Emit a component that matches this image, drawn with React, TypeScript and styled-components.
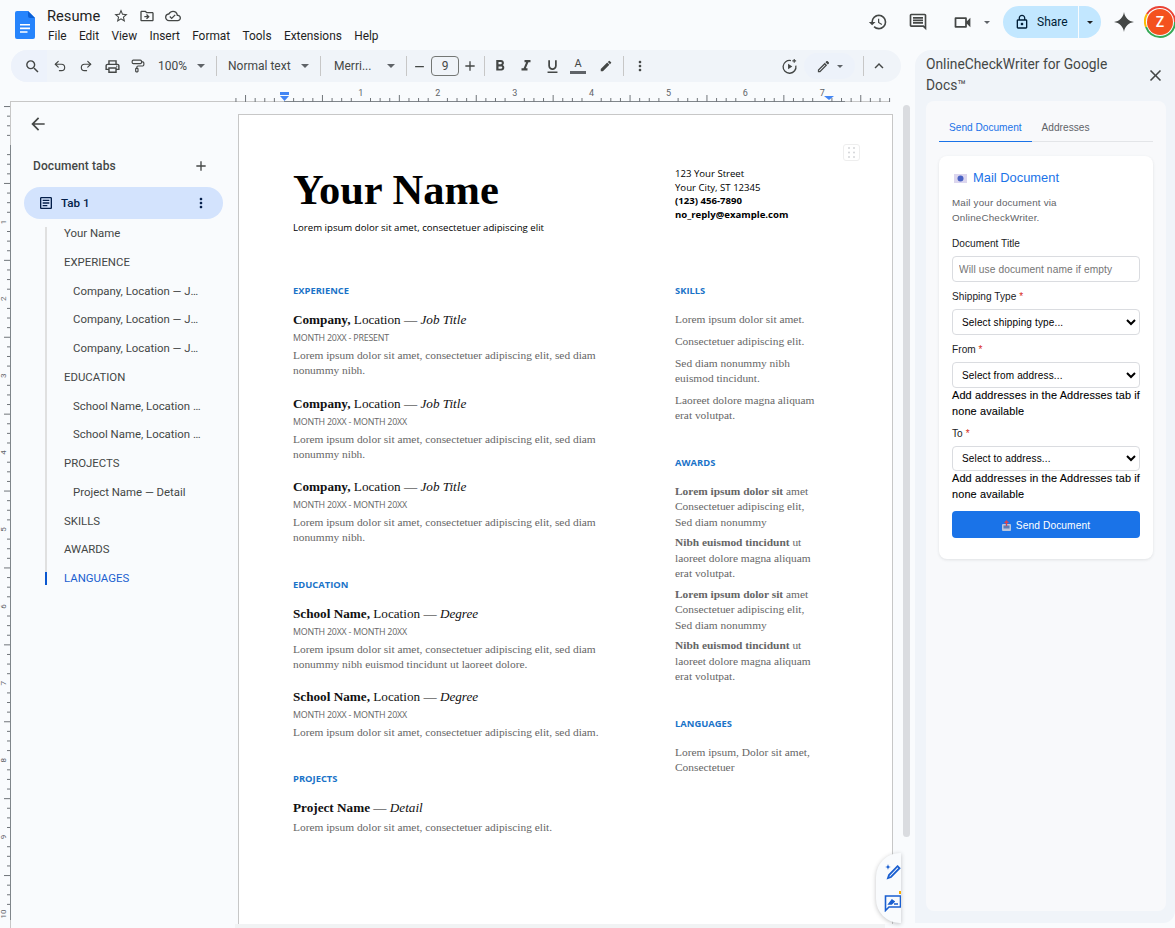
import React from "react";
import styled, { createGlobalStyle } from "styled-components";
import {
  MdSearch, MdOutlinePrint, MdFormatBold, MdFormatItalic,
  MdFormatUnderlined, MdStarBorder, MdOutlineDriveFileMove, MdOutlineCloudDone, MdHistory,
  MdOutlineComment, MdOutlineVideocam, MdLockOutline, MdMoreVert, MdExpandLess, MdArrowBack,
  MdAdd, MdRemove, MdClose, MdOutlineArticle, MdEdit, MdOutlineEdit,
} from "react-icons/md";
import { Undo2, Redo2, PaintRoller } from "lucide-react";

const Global = createGlobalStyle`
  html, body { margin: 0; padding: 0; background: #f9fbfd; }
  * { box-sizing: border-box; }
`;

const serif = `"Liberation Serif", serif`;
const open = `"Open Sans", sans-serif`;
const ui = `Roboto, sans-serif`;
const arial = `"Liberation Sans", Arial, sans-serif`;

const Root = styled.div`
  width: 1175px; height: 928px; overflow: hidden; background: #f9fbfd;
  display: flex; flex-direction: column; font-family: ${ui}; color: #1f1f1f;
`;
const Header = styled.header`
  height: 50px; flex: none; display: flex; align-items: center; justify-content: space-between; padding-left: 15px;
`;
const LeftHead = styled.div`display: flex; align-items: center;`;
const TitleBlock = styled.div`margin-left: 12px; display: flex; flex-direction: column;`;
const TitleRow = styled.div`display: flex; align-items: center; height: 20px; color: #444746; gap: 10px;`;
const DocTitle = styled.span`
  font-size: 14.7px; color: #1f1f1f; width: 52px; margin-right: 4px; line-height: 20px;
`;
const MenuBar = styled.nav`display: flex; gap: 12.3px; margin-top: 2px; padding-left: 1px;`;
const MenuItem = styled.span`font-size: 11.9px; line-height: 16px; color: #1f1f1f;`;

const RightHead = styled.div`
  display: flex; align-items: center; color: #444746; margin-right: -1px; align-self: flex-start; padding-top: 6px;
`;
const HeadIcon = styled.span<{ $ml: number }>`
  display: flex; margin-left: ${(p) => p.$ml}px; color: #444746;
`;
const Caret = styled.span<{ $ml?: number; $dark?: boolean }>`
  flex: none; width: 0; height: 0; margin-left: ${(p) => p.$ml ?? 0}px;
  border-left: 4px solid transparent; border-right: 4px solid transparent;
  border-top: 4px solid ${(p) => (p.$dark ? "#1f1f1f" : "#5f6368")};
`;
const SmallCaret = styled(Caret)`
  border-left-width: 3px; border-right-width: 3px; border-top-width: 3px;
`;
const SharePill = styled.div`
  margin-left: 13px; width: 98px; height: 32px; border-radius: 16px; background: #c2e7ff;
  display: flex; align-items: center; color: #001d35;
`;
const ShareMain = styled.div`
  width: 76px; height: 100%; padding-left: 11px; display: flex; align-items: center; gap: 7px;
  border-right: 1px solid #f9fbfd; font-size: 12px; font-weight: 400;
`;
const ShareCaret = styled.div`flex: 1; display: flex; justify-content: center;`;
const Avatar = styled.div`
  position: relative; flex: none; margin-left: 10px; width: 32px; height: 32px;
`;
const AvatarFace = styled.div`
  position: absolute; inset: 3px; border-radius: 50%; background: #f4511e; color: #fff;
  display: flex; align-items: center; justify-content: center; font-size: 14px; font-weight: 500;
`;

const Body = styled.div`flex: 1; display: flex; min-height: 0;`;
const LeftColumn = styled.div`
  position: relative; width: 915px; flex: none; display: flex; flex-direction: column; overflow: hidden;
`;
const Toolbar = styled.div`
  flex: none; height: 32px; margin-left: 11px; width: 890px; padding-right: 9px; border-radius: 16px;
  background: #f0f4f9; display: flex; align-items: center; color: #444746; overflow: hidden;
`;
const SearchSlot = styled.div`
  width: 36px; height: 100%; padding-left: 8px; display: flex; align-items: center; background: #edf2fb;
`;
const ToolBtn = styled.span<{ $ml?: number; $w?: number }>`
  flex: none; width: ${(p) => p.$w ?? 26}px; margin-left: ${(p) => p.$ml ?? 0}px;
  display: flex; align-items: center; justify-content: center; color: #444746;
`;
const Dropdown = styled.div<{ $ml: number; $w: number }>`
  flex: none; margin-left: ${(p) => p.$ml}px; width: ${(p) => p.$w}px;
  display: flex; align-items: center; justify-content: space-between; padding-right: 1px;
  font-size: 12px; color: #444746;
`;
const Sep = styled.span<{ $ml: number }>`
  flex: none; width: 1px; height: 20px; background: #c7c7c7; margin-left: ${(p) => p.$ml}px;
`;
const SizeBox = styled.span`
  flex: none; margin-left: 4px; width: 28px; height: 20px; border: 1px solid #747775; border-radius: 4px;
  display: flex; align-items: center; justify-content: center; font-size: 12px; color: #444746;
`;
const ColorA = styled.span`
  flex: none; width: 26px; display: flex; flex-direction: column; align-items: center;
  font-size: 11px; line-height: 12px; color: #444746;
`;
const ColorBar = styled.span`width: 16px; height: 3px; background: #5f6368; margin-top: 1px;`;
const Spacer = styled.span`flex: 1;`;
const ModePill = styled.div`
  flex: none; margin-left: 2px; width: 51px; height: 26px; border-radius: 13px; background: #edf2fa;
  display: flex; align-items: center; justify-content: center; gap: 6px; color: #444746;
`;

const RulerSvg = styled.svg`display: block; flex: none; font-family: ${ui};`;
const Editor = styled.div`flex: 1; display: flex; min-height: 0;`;
const Sidebar = styled.aside`
  width: 227px; flex: none; display: flex; flex-direction: column;
`;
const BackRow = styled.div`
  height: 44px; flex: none; padding-left: 17px; display: flex; align-items: center; color: #444746;
`;
const TabsHead = styled.div`
  height: 40px; flex: none; margin: 0 29px 0 22px; display: flex; align-items: center; justify-content: space-between;
  font-size: 12px; font-weight: 500; color: #444746; letter-spacing: 0.1px;
`;
const TabPill = styled.div`
  flex: none; margin: 1px 15px 0 13px; height: 32px; border-radius: 16px; background: #d3e3fd;
  display: flex; align-items: center; padding: 0 14px 0 14px; color: #041e49; font-size: 11.6px; font-weight: 500;
`;
const TabLabel = styled.span`flex: 1; margin-left: 7px;`;
const Outline = styled.ul`
  position: relative; list-style: none; margin: 0 0 0 34px; padding: 0; width: 170px;
  &::before { content: ""; position: absolute; left: 0; top: 8px; bottom: 8px; width: 2px; background: #e0e0e0; }
  &::after { content: ""; position: absolute; left: 0; bottom: 8px; height: 13px; width: 2px; background: #0b57d0; }
`;
const OutlineItem = styled.li<{ $nested?: boolean; $active?: boolean }>`
  height: 28.75px; line-height: 28.75px; padding-left: ${(p) => (p.$nested ? 28 : 19)}px; padding-right: 11px;
  font-size: 11.4px; color: ${(p) => (p.$active ? "#1a5fd0" : "#444746")};
  white-space: nowrap; overflow: hidden; text-overflow: ellipsis;
`;
const PageColumn = styled.div`
  width: 655px; flex: none; padding-top: 12px; display: flex; flex-direction: column;
`;
const Page = styled.main`
  position: relative; flex: none; height: 810px; background: #fff; border: 1px solid #c7c7c7; border-bottom: 0;
  padding: 50px 0 0 54px; overflow: hidden;
`;
const HScroll = styled.div`height: 4px; margin-left: -3px; width: 650px; background: #f1f3f4; flex: none;`;
const DragHandle = styled.div`
  position: absolute; top: 29px; left: 604px; width: 17px; height: 17px; border: 1px solid #eeeeee; border-radius: 3px;
  display: flex; align-items: center; justify-content: center;
`;
const PageGrid = styled.div`display: grid; grid-template-columns: 382px 170px;`;
const Name = styled.h1`
  margin: 0; font: 700 42.5px/50px ${serif}; color: #000;
`;
const Tagline = styled.p`margin: 6px 0 49px; font: 400 9.65px/14px ${open}; color: #000;`;
const Contact = styled.div`padding-top: 2px;`;
const ContactLine = styled.div<{ $bold?: boolean }>`
  font: ${(p) => (p.$bold ? 700 : 400)} 9.6px/13.7px ${open}; color: #000;
`;
const Heading = styled.h2<{ $mt?: number }>`
  margin: ${(p) => p.$mt ?? 0}px 0 0; font: 700 9.4px/14px ${open}; color: #1a73c8;
`;
const Role = styled.h3<{ $mt?: number }>`
  margin: ${(p) => p.$mt ?? 15.5}px 0 0; font: 400 13.2px/20px ${serif}; color: #111;
  b { font-weight: 700; }
`;
const Dates = styled.div`margin-top: 1px; font: 400 8.9px/14px ${open}; color: #666; letter-spacing: -0.22px;`;
const Lorem = styled.p<{ $mt?: number }>`
  margin: ${(p) => p.$mt ?? 3}px 0 0; max-width: 312px; font: 400 11.4px/15px ${serif}; color: #666;
`;
const SideText = styled.p<{ $mt?: number }>`
  margin: ${(p) => p.$mt ?? 7}px 0 0; font: 400 11.4px/15px ${serif}; color: #666;
`;
const AwardText = styled(SideText)`
  line-height: 15.3px;
  b { font-weight: 700; }
`;
const ThumbTrack = styled.div`
  flex: none; margin: 3px 0 0 10px; width: 7px; height: 732px; border-radius: 4px; background: #dadce0;
`;
const FloatDock = styled.div`
  position: absolute; left: 876px; top: 803px; width: 25px; height: 70px; background: #f9fbfd;
  border-radius: 24px 0 0 24px; box-shadow: 0 1px 4px rgba(60, 64, 67, 0.3); overflow: hidden;
  display: flex; flex-direction: column; padding-left: 8px; padding-top: 10px; gap: 13px; color: #1a5fd0;
  &::after { content: ""; position: absolute; right: 0; top: 38px; width: 2px; height: 3px; background: #f9ab00; }
`;

const Panel = styled.aside`
  width: 260px; flex: none; height: 873px; background: #f0f4f9; border-radius: 16px 0 12px 0;
  padding: 4px 9px 0 11px; display: flex; flex-direction: column;
`;
const PanelHead = styled.div`height: 47px; flex: none; display: flex; align-items: center; justify-content: space-between;`;
const PanelTitle = styled.div`
  width: 200px; font-size: 13.8px; line-height: 21px; color: #444746; margin-top: -5px;
`;
const CloseBtn = styled.span`display: flex; color: #444746; margin-right: 1px; margin-top: -5px;`;
const Inner = styled.div`
  height: 810px; flex: none; border-radius: 8px; background: #f8f9fb; padding: 0 13px;
`;
const Tabs = styled.div`display: flex; height: 41px; border-bottom: 1px solid #e3e5e8;`;
const TabLink = styled.div<{ $active?: boolean }>`
  height: 41px; padding: 19px 10px 0; font: 400 10.15px/15px ${arial};
  color: ${(p) => (p.$active ? "#1a73e8" : "#5f6368")};
  border-bottom: ${(p) => (p.$active ? "1px solid #1a73e8" : "0")};
`;
const Card = styled.section`
  margin-top: 14px; background: #fff; border-radius: 8px; box-shadow: 0 1px 3px rgba(60, 64, 67, 0.12);
  padding: 12px 13px 19px; height: 403px;
`;
const CardTitle = styled.div`
  height: 20px; display: flex; align-items: center; gap: 6px; padding-left: 2px;
  font: 400 12.9px/20px ${arial}; color: #1a73e8;
`;
const CardDesc = styled.p`margin: 6.5px 0 0; font: 400 9.8px/15px ${arial}; color: #5f6368; letter-spacing: 0.18px;`;
const Field = styled.div<{ $mt: number }>`margin-top: ${(p) => p.$mt}px;`;
const Label = styled.label`
  display: block; font: 400 10.1px/14px ${arial}; color: #202124; margin-bottom: 5px; letter-spacing: 0.05px;
  em { font-style: normal; color: #d93025; }
`;
const TextInput = styled.input`
  display: block; width: 188px; height: 26px; border: 1px solid #dadce0; border-radius: 4px; padding: 0 6px;
  font: 400 10.2px ${arial}; background: #fff; outline: 0; letter-spacing: 0.1px;
  &::placeholder { color: #757575; opacity: 1; }
`;
const SelectBox = styled.select<{ $h: number }>`
  display: block; width: 188px; height: ${(p) => p.$h}px; border: 1px solid #dadce0; border-radius: 4px;
  padding: 0 5px; background: #fff; color: #000; font: 400 10px ${arial}; letter-spacing: 0.15px;
`;
const Hint = styled.div`
  margin: -1px 0 1px; font: 400 10.9px/16px ${arial}; color: #000; letter-spacing: 0.14px; -webkit-text-stroke: 0.1px #000;
`;
const SendButton = styled.button`
  display: flex; align-items: center; justify-content: center; gap: 5px; margin-top: 9px;
  width: 188px; height: 27px; border: 0; border-radius: 4px; background: #1a73e8; color: #fff;
  font: 400 10.2px ${arial}; letter-spacing: 0.1px; padding: 1px 0 0;
`;

const Logo = () => (
  <svg width="20" height="28" viewBox="0 0 20 28">
    <path d="M2 0h11l7 7v19a2 2 0 0 1-2 2H2a2 2 0 0 1-2-2V2a2 2 0 0 1 2-2z" fill="#2684fc" />
    <path d="M13 0l7 7h-5a2 2 0 0 1-2-2z" fill="#0a5fd6" />
    <path d="M5 13h10v1.6H5zM5 16.6h10v1.6H5zM5 20.2h7.5v1.6H5z" fill="#fff" />
  </svg>
);
const Gemini = () => (
  <svg width="20" height="20" viewBox="0 0 20 20">
    <path d="M10 0c.7 5.4 4.6 9.3 10 10-5.4.7-9.3 4.6-10 10-.7-5.4-4.6-9.3-10-10 5.4-.7 9.3-4.6 10-10z" fill="#444746" />
  </svg>
);
const AvatarRing = () => (
  <svg width="32" height="32" viewBox="0 0 32 32" fill="none" strokeWidth="2">
    <path d="M16 1a15 15 0 0 1 15 15" stroke="#ea4335" />
    <path d="M31 16a15 15 0 0 1-15 15" stroke="#34a853" />
    <path d="M16 31A15 15 0 0 1 2 21" stroke="#34a853" />
    <path d="M2 21A15 15 0 0 1 3 8" stroke="#fbbc04" />
    <path d="M3 8A15 15 0 0 1 16 1" stroke="#ea4335" />
  </svg>
);
const VoiceIcon = () => (
  <svg width="17" height="17" viewBox="0 0 18 18" fill="none" stroke="#444746" strokeWidth="1.4">
    <path d="M10.5 2.7A6.8 6.8 0 1 0 15.7 8" />
    <path d="M7.5 6v6l4.5-3z" fill="#444746" stroke="none" />
    <path d="M14 1v4M12 3h4" strokeWidth="1.2" />
  </svg>
);
const SparkPen = () => (
  <svg width="18" height="18" viewBox="0 0 18 18" fill="none" stroke="#1a5fd0" strokeWidth="1.8">
    <path d="M13.5 3.2l2 2L7 14l-3 1 1-3z" />
    <path d="M4 1c.3 2 1 2.7 3 3-2 .3-2.7 1-3 3-.3-2-1-2.7-3-3 2-.3 2.7-1 3-3z" fill="#1a5fd0" stroke="none" />
  </svg>
);
const FeedbackIcon = () => (
  <svg width="18" height="18" viewBox="0 0 18 18" fill="none" stroke="#1a5fd0" strokeWidth="1.6">
    <path d="M1.5 2h15v11H5l-3.5 3.5z" />
    <path d="M5 10l3-4 2 1.5L7.5 10zM10 10h4" fill="#1a5fd0" />
  </svg>
);
const MailGlyph = () => (
  <svg width="13" height="9" viewBox="0 0 13 9">
    <rect width="13" height="9" fill="#dcd6ee" />
    <circle cx="6.5" cy="4.5" r="3" fill="#4a62c4" />
  </svg>
);
const SendGlyph = () => (
  <svg width="9" height="11" viewBox="0 0 9 11">
    <rect y="4" width="9" height="7" rx="1" fill="#b9c6dd" />
    <rect x="1.5" y="5.5" width="6" height="3" fill="#5b7bb5" />
    <path d="M4.5 0L7 3H5.2v3H3.8V3H2z" fill="#d8434e" />
  </svg>
);
const GripDots = () => (
  <svg width="9" height="11" viewBox="0 0 9 11" fill="#d4d6d9">
    {[1, 5.5, 10].flatMap((y) => [2, 7].map((x) => <circle key={`${x}-${y}`} cx={x} cy={y} r="1" />))}
  </svg>
);

const ZERO = 284;
const INCH = 76.9;
const HorizontalRuler = () => {
  const ticks = [];
  for (let i = -5; i <= 63; i++) {
    if (i % 8 === 0) continue;
    const x = ZERO + (i * INCH) / 8;
    ticks.push(<line key={i} x1={x} x2={x} y1={i % 4 === 0 ? 12 : 15} y2={19} stroke="#70757a" strokeWidth="1" />);
  }
  return (
    <RulerSvg width="915" height="20" viewBox="0 -1 915 20">
      <line x1="10" x2="284" y1="18.5" y2="18.5" stroke="#c7c7c7" />
      <line x1="284" x2="845" y1="18.5" y2="18.5" stroke="#80868b" />
      <line x1="845" x2="890" y1="18.5" y2="18.5" stroke="#c7c7c7" />
      {ticks}
      {[1, 2, 3, 4, 5, 6, 7].map((n) => (
        <text key={n} x={ZERO + n * INCH} y="13" fontSize="9" fill="#5f6368" textAnchor="middle">{n}</text>
      ))}
      <rect x="280" y="9" width="9" height="3" fill="#4285f4" />
      <path d="M280 13h9l-4.5 5z" fill="#4285f4" />
      <path d="M824 13h10l-5 4z" fill="#4285f4" />
    </RulerSvg>
  );
};
const VerticalRuler = () => {
  const ticks = [];
  for (let i = -4; i <= 80; i++) {
    if (i % 8 === 0) continue;
    const y = 43 + (i * INCH) / 8;
    ticks.push(<line key={i} x1={i % 4 === 0 ? 4 : 7} x2={10} y1={y} y2={y} stroke="#70757a" />);
  }
  return (
    <RulerSvg width="11" height="826" viewBox="0 0 11 826">
      <line x1="10.5" x2="10.5" y1="0" y2="43" stroke="#c7c7c7" />
      <line x1="10.5" x2="10.5" y1="43" y2="818" stroke="#80868b" />
      <line x1="10.5" x2="10.5" y1="818" y2="826" stroke="#c7c7c7" />
      {ticks}
      {[1, 2, 3, 4, 5, 6, 7, 8, 9, 10].map((n) => (
        <text key={n} x="0" y="0" fontSize="8" fill="#5f6368" textAnchor="middle"
          transform={`translate(6 ${43 + n * INCH}) rotate(-90)`}>{n}</text>
      ))}
    </RulerSvg>
  );
};

const outline: [string, boolean?, boolean?][] = [
  ["Your Name"], ["EXPERIENCE"],
  ["Company, Location — Job Title", true], ["Company, Location — Job Title", true], ["Company, Location — Job Title", true],
  ["EDUCATION"],
  ["School Name, Location — Degree", true], ["School Name, Location — Degree", true],
  ["PROJECTS"], ["Project Name — Detail", true], ["SKILLS"], ["AWARDS"], ["LANGUAGES", false, true],
];
const L1 = "Lorem ipsum dolor sit amet, consectetuer adipiscing elit, sed diam nonummy nibh.";
const menus = ["File", "Edit", "View", "Insert", "Format", "Tools", "Extensions", "Help"];

const Job = ({ place, title, dates, text, mt }: { place: string; title: string; dates: string; text: string; mt?: number }) => (
  <>
    <Role $mt={mt}><b>{place},</b> Location — <i>{title}</i></Role>
    <Dates>{dates}</Dates>
    <Lorem>{text}</Lorem>
  </>
);

const AwardA = ({ mt }: { mt: number }) => (
  <AwardText $mt={mt}><b>Lorem ipsum dolor sit</b> amet<br />Consectetuer adipiscing elit,<br />Sed diam nonummy</AwardText>
);
const AwardB = ({ mt }: { mt: number }) => (
  <AwardText $mt={mt}><b>Nibh euismod tincidunt</b> ut<br />laoreet dolore magna aliquam<br />erat volutpat.</AwardText>
);

export default function App() {
  return (
    <Root>
      <Global />
      <Header>
        <LeftHead>
          <Logo />
          <TitleBlock>
            <TitleRow>
              <DocTitle>Resume</DocTitle>
              <MdStarBorder size={16} />
              <MdOutlineDriveFileMove size={16} />
              <MdOutlineCloudDone size={16} />
            </TitleRow>
            <MenuBar>{menus.map((m) => <MenuItem key={m}>{m}</MenuItem>)}</MenuBar>
          </TitleBlock>
        </LeftHead>
        <RightHead>
          <HeadIcon $ml={0}><MdHistory size={20} /></HeadIcon>
          <HeadIcon $ml={20}><MdOutlineComment size={20} /></HeadIcon>
          <HeadIcon $ml={24}><MdOutlineVideocam size={21} /></HeadIcon>
          <SmallCaret $ml={11} />
          <SharePill>
            <ShareMain><MdLockOutline size={16} /><span>Share</span></ShareMain>
            <ShareCaret><SmallCaret $dark /></ShareCaret>
          </SharePill>
          <HeadIcon $ml={13}><Gemini /></HeadIcon>
          <Avatar><AvatarRing /><AvatarFace>Z</AvatarFace></Avatar>
        </RightHead>
      </Header>
      <Body>
        <LeftColumn>
          <Toolbar>
            <SearchSlot><ToolBtn><MdSearch size={17} /></ToolBtn></SearchSlot>
            <ToolBtn><Undo2 size={14} /></ToolBtn>
            <ToolBtn><Redo2 size={14} /></ToolBtn>
            <ToolBtn><MdOutlinePrint size={17} /></ToolBtn>
            <ToolBtn><PaintRoller size={14} /></ToolBtn>
            <Dropdown $ml={7} $w={48}><span>100%</span><Caret /></Dropdown>
            <Sep $ml={10} />
            <Dropdown $ml={11} $w={82}><span>Normal text</span><Caret /></Dropdown>
            <Sep $ml={10} />
            <Dropdown $ml={13} $w={62}><span>Merri...</span><Caret /></Dropdown>
            <Sep $ml={10} />
            <ToolBtn $ml={4} $w={16}><MdRemove size={15} /></ToolBtn>
            <SizeBox>9</SizeBox>
            <ToolBtn $ml={3} $w={16}><MdAdd size={16} /></ToolBtn>
            <Sep $ml={6} />
            <ToolBtn $ml={2}><MdFormatBold size={18} /></ToolBtn>
            <ToolBtn><MdFormatItalic size={18} /></ToolBtn>
            <ToolBtn><MdFormatUnderlined size={17} /></ToolBtn>
            <ColorA>A<ColorBar /></ColorA>
            <ToolBtn $ml={2}><MdEdit size={14} /></ToolBtn>
            <Sep $ml={4} />
            <ToolBtn $ml={3}><MdMoreVert size={16} /></ToolBtn>
            <Spacer />
            <ToolBtn><VoiceIcon /></ToolBtn>
            <ModePill><MdOutlineEdit size={15} /><SmallCaret /></ModePill>
            <Sep $ml={8} />
            <ToolBtn $ml={2}><MdExpandLess size={18} /></ToolBtn>
          </Toolbar>
          <HorizontalRuler />
          <Editor>
            <VerticalRuler />
            <Sidebar>
              <BackRow><MdArrowBack size={20} /></BackRow>
              <TabsHead><span>Document tabs</span><MdAdd size={16} /></TabsHead>
              <TabPill>
                <MdOutlineArticle size={16} />
                <TabLabel>Tab 1</TabLabel>
                <MdMoreVert size={16} />
              </TabPill>
              <Outline>
                {outline.map(([t, nested, active], i) => (
                  <OutlineItem key={i} $nested={nested} $active={active}>{t}</OutlineItem>
                ))}
              </Outline>
            </Sidebar>
            <PageColumn>
              <Page>
                <DragHandle><GripDots /></DragHandle>
                <PageGrid>
                  <div>
                    <Name>Your Name</Name>
                    <Tagline>Lorem ipsum dolor sit amet, consectetuer adipiscing elit</Tagline>
                  </div>
                  <Contact>
                    <ContactLine>123 Your Street</ContactLine>
                    <ContactLine>Your City, ST 12345</ContactLine>
                    <ContactLine $bold>(123) 456-7890</ContactLine>
                    <ContactLine $bold>no_reply@example.com</ContactLine>
                  </Contact>
                  <div>
                    <Heading>EXPERIENCE</Heading>
                    <Job mt={12} place="Company" title="Job Title" dates="MONTH 20XX - PRESENT" text={L1} />
                    <Job place="Company" title="Job Title" dates="MONTH 20XX - MONTH 20XX" text={L1} />
                    <Job place="Company" title="Job Title" dates="MONTH 20XX - MONTH 20XX" text={L1} />
                    <Heading $mt={32.5}>EDUCATION</Heading>
                    <Job mt={12} place="School Name" title="Degree" dates="MONTH 20XX - MONTH 20XX"
                      text="Lorem ipsum dolor sit amet, consectetuer adipiscing elit, sed diam nonummy nibh euismod tincidunt ut laoreet dolore." />
                    <Job place="School Name" title="Degree" dates="MONTH 20XX - MONTH 20XX"
                      text="Lorem ipsum dolor sit amet, consectetuer adipiscing elit, sed diam." />
                    <Heading $mt={32}>PROJECTS</Heading>
                    <Role $mt={12}><b>Project Name</b> — <i>Detail</i></Role>
                    <Lorem $mt={1.5}>Lorem ipsum dolor sit amet, consectetuer adipiscing elit.</Lorem>
                  </div>
                  <div>
                    <Heading>SKILLS</Heading>
                    <SideText $mt={13.5}>Lorem ipsum dolor sit amet.</SideText>
                    <SideText>Consectetuer adipiscing elit.</SideText>
                    <SideText>Sed diam nonummy nibh<br />euismod tincidunt.</SideText>
                    <SideText>Laoreet dolore magna aliquam<br />erat volutpat.</SideText>
                    <Heading $mt={33}>AWARDS</Heading>
                    <AwardA mt={14.5} />
                    <AwardB mt={5.6} />
                    <AwardA mt={5.6} />
                    <AwardB mt={5.6} />
                    <Heading $mt={33}>LANGUAGES</Heading>
                    <SideText $mt={13.5}>Lorem ipsum, Dolor sit amet, Consectetuer</SideText>
                  </div>
                </PageGrid>
              </Page>
              <HScroll />
            </PageColumn>
            <ThumbTrack />
          </Editor>
          <FloatDock><SparkPen /><FeedbackIcon /></FloatDock>
        </LeftColumn>
        <Panel>
          <PanelHead>
            <PanelTitle>OnlineCheckWriter for Google Docs™</PanelTitle>
            <CloseBtn><MdClose size={19} /></CloseBtn>
          </PanelHead>
          <Inner>
            <Tabs>
              <TabLink $active>Send Document</TabLink>
              <TabLink>Addresses</TabLink>
            </Tabs>
            <Card>
              <CardTitle><MailGlyph />Mail Document</CardTitle>
              <CardDesc>Mail your document via OnlineCheckWriter.</CardDesc>
              <Field $mt={12.5}>
                <Label>Document Title</Label>
                <TextInput placeholder="Will use document name if empty" />
              </Field>
              <Field $mt={8}>
                <Label>Shipping Type <em>*</em></Label>
                <SelectBox $h={26}><option>Select shipping type...</option></SelectBox>
              </Field>
              <Field $mt={8}>
                <Label>From <em>*</em></Label>
                <SelectBox $h={26}><option>Select from address...</option></SelectBox>
                <Hint>Add addresses in the Addresses tab if none available</Hint>
              </Field>
              <Field $mt={8}>
                <Label>To <em>*</em></Label>
                <SelectBox $h={25}><option>Select to address...</option></SelectBox>
                <Hint>Add addresses in the Addresses tab if none available</Hint>
              </Field>
              <SendButton><SendGlyph />Send Document</SendButton>
            </Card>
          </Inner>
        </Panel>
      </Body>
    </Root>
  );
}
